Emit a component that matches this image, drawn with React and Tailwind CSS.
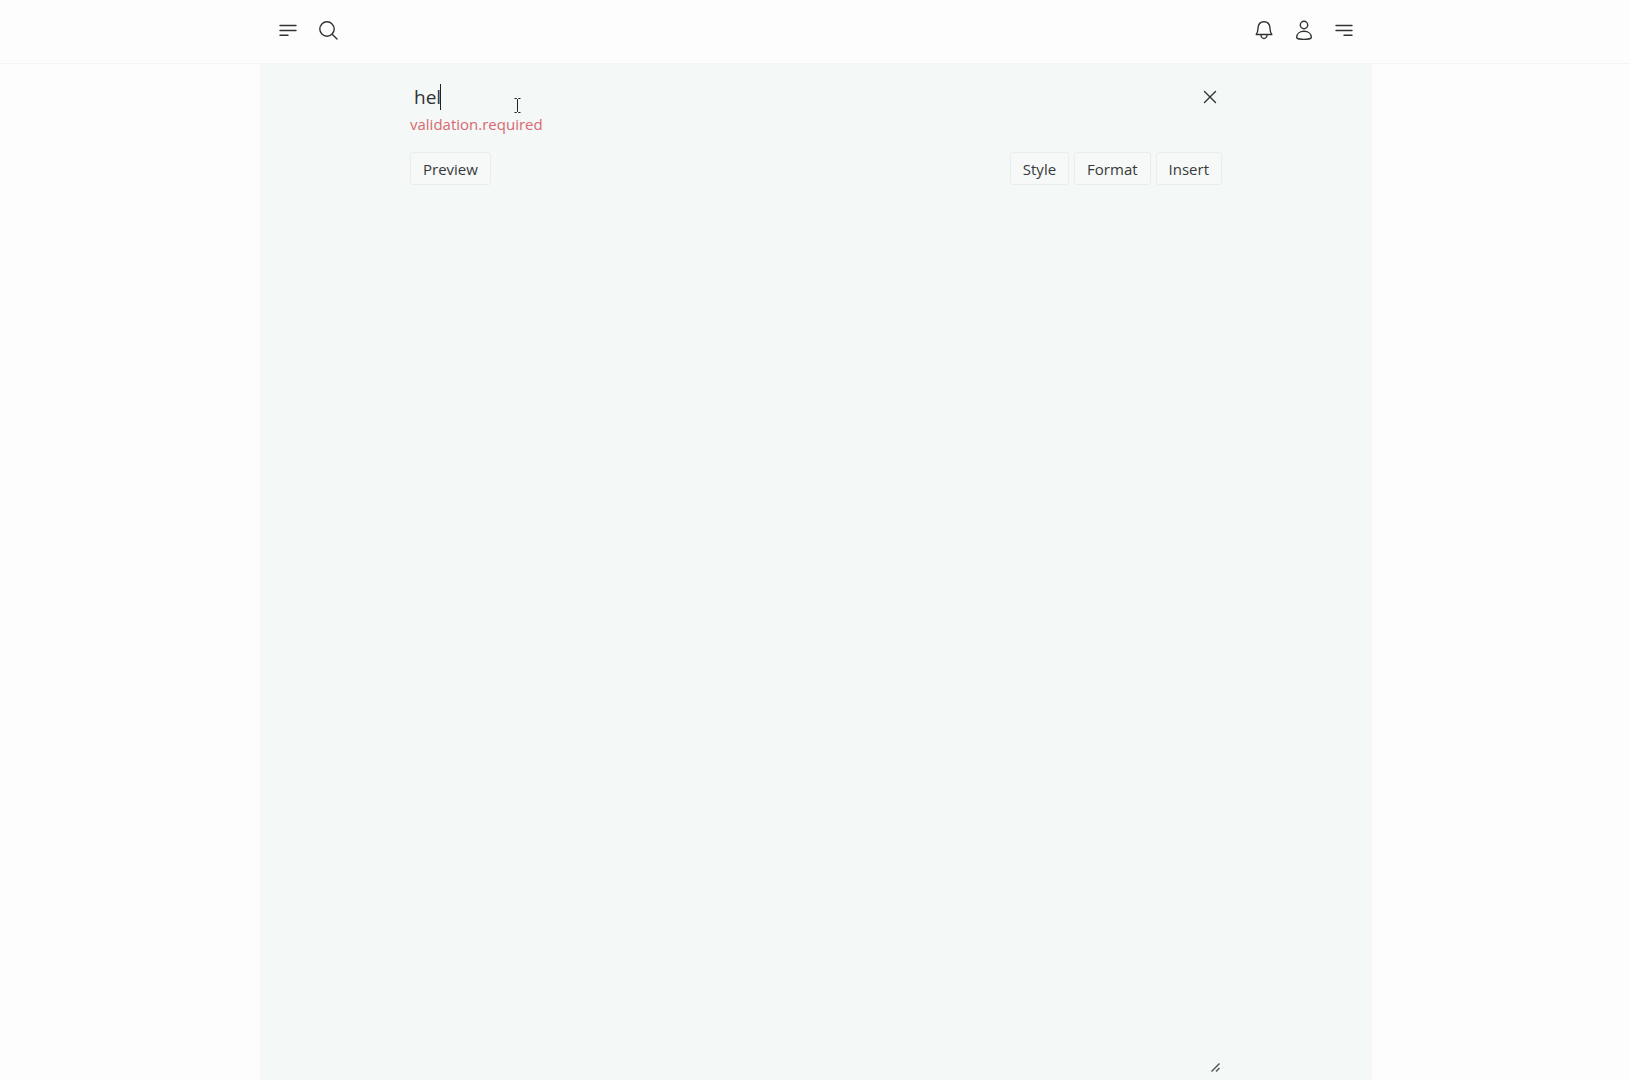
import React, { useState } from "react";

function Icon({ children, size = 20 }) {
  return (
    <svg
      width={size}
      height={size}
      viewBox={`0 0 ${size} ${size}`}
      fill="none"
      stroke="currentColor"
      strokeWidth="1.4"
      strokeLinecap="round"
      strokeLinejoin="round"
      aria-hidden="true"
    >
      {children}
    </svg>
  );
}

function IconButton({ label, children }) {
  return (
    <button type="button" aria-label={label} className="flex h-10 w-10 items-center justify-center">
      <Icon>{children}</Icon>
    </button>
  );
}

function ToolButton({ children }) {
  return (
    <button
      type="button"
      className="h-[33px] rounded-[3px] border border-[#e9eeec] bg-[#f6f9f8] px-3 text-[15px] leading-5 text-[#363939]"
    >
      {children}
    </button>
  );
}

function Header() {
  return (
    <header className="h-16 border-b border-[#f3f5f5] pl-[2px]">
      <div className="mx-auto flex h-[60px] max-w-[1112px] items-center justify-between px-2">
        <nav className="flex">
          <IconButton label="Menu">
            <path d="M2 5.500h16M2 10.500h16M2 15.300h8" />
          </IconButton>
          <IconButton label="Search">
            <circle cx="9" cy="9" r="7.200" />
            <path d="M14.200 14.200 19 19" />
          </IconButton>
        </nav>
        <nav className="flex">
          <IconButton label="Notifications">
            <path d="M2.200 14.500C3.800 12.800 3.900 11.200 4 8.300C4.200 4.200 6.600 1.800 10 1.800s5.800 2.400 6 6.500c.1 2.900.2 4.500 1.800 6.200z" />
            <path d="M7 14.700a3 3.800 0 0 0 6 0" />
          </IconButton>
          <IconButton label="Account">
            <circle cx="10" cy="5" r="3.700" />
            <path d="M2.700 17.400C2.700 13.600 5.800 11.300 10 11.300s7.300 2.300 7.300 6.100c0 .9-3 2-7.300 2s-7.300-1.100-7.300-2z" />
          </IconButton>
          <IconButton label="More">
            <path d="M2 5.500h16M2 10.500h16M10 15.300h8" />
          </IconButton>
        </nav>
      </div>
    </header>
  );
}

export default function App() {
  const [title, setTitle] = useState("hel");
  const [body, setBody] = useState("");

  return (
    <div className="flex min-h-screen flex-col bg-[#fdfdfd] font-['Open_Sans','Noto_Sans',sans-serif] text-[#303334]">
      <Header />
      <div className="flex flex-1 flex-col pl-[2px]">
        <main className="mx-auto flex w-full max-w-[1112px] flex-1 flex-col bg-[#f4f8f7]">
          <form className="mx-auto flex w-full max-w-[812px] flex-1 flex-col pt-4 pb-2">
            <div className="relative flex items-center justify-between">
              <input
                type="text"
                aria-label="Title"
                value={title}
                onChange={(e) => setTitle(e.target.value)}
                className="h-[34px] min-w-0 flex-1 bg-transparent px-1 text-[19px] caret-transparent outline-none"
              />
              <span className="pointer-events-none absolute top-1 left-[30px] h-[26px] w-px bg-[#202324]" />
              <svg
                className="pointer-events-none absolute top-[18px] left-[104px]"
                width="7"
                height="15"
                viewBox="0 0 7 15"
                fill="none"
                stroke="#202324"
                aria-hidden="true"
              >
                <path d="M.5.5h2l1 1 1-1h2M3.500 1.500v12M.5 14.500h2l1-1 1 1h2" />
              </svg>
              <button type="button" aria-label="Close" className="flex h-6 w-6 items-center justify-center">
                <Icon>
                  <path d="M4.500 4.500 15.500 15.500M15.500 4.500 4.500 15.500" />
                </Icon>
              </button>
            </div>
            <p className="text-[15px] leading-5 text-[#d9696f]">validation.required</p>
            <div className="mt-[18px] flex justify-between">
              <ToolButton>Preview</ToolButton>
              <div className="flex gap-[5px]">
                <ToolButton>Style</ToolButton>
                <ToolButton>Format</ToolButton>
                <ToolButton>Insert</ToolButton>
              </div>
            </div>
            <div className="relative mt-2 flex flex-1">
              <textarea
                aria-label="Body"
                value={body}
                onChange={(e) => setBody(e.target.value)}
                className="w-full flex-1 resize-none bg-transparent p-1 text-base outline-none"
              />
              <svg
                className="pointer-events-none absolute right-[2px] bottom-0"
                width="9"
                height="9"
                viewBox="0 0 9 9"
                stroke="#55595a"
                strokeWidth="1.500"
                aria-hidden="true"
              >
                <path d="M.5 8.500 8.500.5M5 8.500 8.500 5" />
              </svg>
            </div>
          </form>
        </main>
      </div>
    </div>
  );
}
